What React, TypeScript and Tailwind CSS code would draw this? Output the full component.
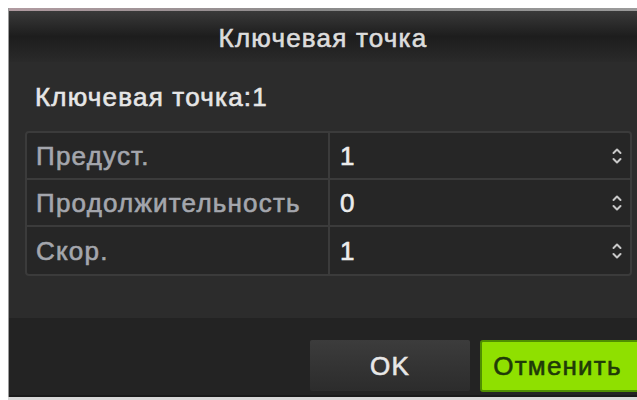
const font = "font-[family-name:Liberation_Sans,Arial,sans-serif]";

type Field = { label: string; value: string };

const fields: Field[] = [
  { label: "Предуст.", value: "1" },
  { label: "Продолжительность", value: "0" },
  { label: "Скор.", value: "1" },
];

function SpinIcon() {
  return (
    <svg viewBox="0 0 12 22" className="h-[22px] w-[12px]" fill="none" aria-hidden="true">
      <path d="M2.5 8l3.5-3.5 3.5 3.5" stroke="#c8c8c8" strokeWidth="2" strokeLinecap="round" strokeLinejoin="round" />
      <path d="M2.5 14l3.5 3.5 3.5-3.5" stroke="#c8c8c8" strokeWidth="2" strokeLinecap="round" strokeLinejoin="round" />
    </svg>
  );
}

function FieldRow({ field, last }: { field: Field; last: boolean }) {
  return (
    <div className={`flex h-[47px] ${last ? "" : "border-b-2 border-[#3b3b3b]"}`}>
      <div className="flex w-[303px] items-center border-r-2 border-[#3b3b3b] pl-[9px] text-[#a4a6ad]">
        {field.label}
      </div>
      <div className="flex flex-1 items-center justify-between pl-[10px] pr-[7px] text-[#ececec]">
        <span>{field.value}</span>
        <SpinIcon />
      </div>
    </div>
  );
}

export default function App() {
  return (
    <div
      className={`${font} flex h-[400px] w-[637px] flex-col bg-white pl-[8px] pt-[8px] text-[26px] leading-none tracking-[1.2px] [-webkit-text-stroke:0.6px_currentColor]`}
    >
      <div className="flex h-[389px] flex-col overflow-hidden border-l border-[#9a9a9a] bg-[#2b2b2b]">
        {/* title bar */}
        <div className="h-[3px] bg-gradient-to-r from-[#b09aa0] via-[#8a8a8a] to-[#9a9a9a]" />
        <div className="flex h-[51px] items-center justify-center bg-gradient-to-b from-[#3a3a3a] via-[#1d1d1d] to-[#2a2a2a] pt-[2px] text-[#dcdcdc]">
          Ключевая точка
        </div>

        {/* body */}
        <div className="flex h-[256px] flex-col bg-[#2c2c2c]">
          <div className="flex h-[69px] items-center pl-[26px] text-[#e6e6e6]">Ключевая точка:1</div>
          <div className="ml-[16px] mr-[5px] rounded-[4px] border-2 border-[#3b3b3b] bg-[#262626]">
            {fields.map((f, i) => (
              <FieldRow key={f.label} field={f} last={i === fields.length - 1} />
            ))}
          </div>
        </div>

        {/* footer with buttons */}
        <div className="-mr-[4px] flex flex-1 items-start justify-end gap-[10px] border-b-2 border-[#1a1a1a] bg-[#232323] pt-[22px]">
          <button className="flex h-[51px] w-[160px] items-center justify-center rounded-[2px] bg-gradient-to-b from-[#3c3c3c] to-[#2c2c2c] text-[#e8e8e8]">
            OK
          </button>
          <button className="flex h-[52px] w-[161px] items-center justify-center rounded-[3px] border-2 border-[#4f8f00] bg-[#8fe000] pr-[6px] text-[#1f3a08]">
            Отменить
          </button>
        </div>
      </div>
      <div className="flex-1 bg-[#d8d8d8]" />
    </div>
  );
}
